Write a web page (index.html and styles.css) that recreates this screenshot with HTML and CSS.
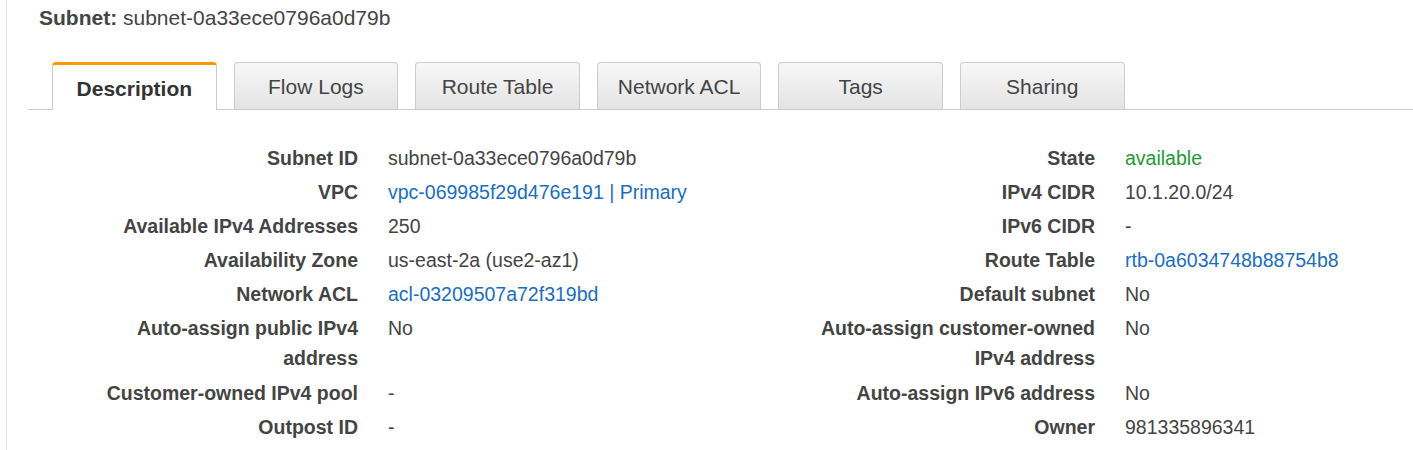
FILE: index.html
```html
<!DOCTYPE html>
<html lang="en">
<head>
<meta charset="utf-8">
<title>Subnet details</title>
<link rel="stylesheet" href="styles.css">
</head>
<body>
<div class="page">
  <div class="header"><span class="header-label">Subnet:</span> subnet-0a33ece0796a0d79b</div>
  <div class="tabs">
    <div class="tab active">Description</div>
    <div class="tab">Flow Logs</div>
    <div class="tab">Route Table</div>
    <div class="tab">Network ACL</div>
    <div class="tab">Tags</div>
    <div class="tab">Sharing</div>
  </div>
  <div class="details">
    <div class="label">Subnet ID</div>
    <div class="value">subnet-0a33ece0796a0d79b</div>
    <div class="label">State</div>
    <div class="value ok">available</div>

    <div class="label">VPC</div>
    <div class="value link">vpc-069985f29d476e191 | Primary</div>
    <div class="label">IPv4 CIDR</div>
    <div class="value">10.1.20.0/24</div>

    <div class="label">Available IPv4 Addresses</div>
    <div class="value">250</div>
    <div class="label">IPv6 CIDR</div>
    <div class="value">-</div>

    <div class="label">Availability Zone</div>
    <div class="value">us-east-2a (use2-az1)</div>
    <div class="label">Route Table</div>
    <div class="value link">rtb-0a6034748b88754b8</div>

    <div class="label">Network ACL</div>
    <div class="value link">acl-03209507a72f319bd</div>
    <div class="label">Default subnet</div>
    <div class="value">No</div>

    <div class="label tall">Auto-assign public IPv4 address</div>
    <div class="value">No</div>
    <div class="label tall">Auto-assign customer-owned IPv4 address</div>
    <div class="value">No</div>

    <div class="label">Customer-owned IPv4 pool</div>
    <div class="value">-</div>
    <div class="label">Auto-assign IPv6 address</div>
    <div class="value">No</div>

    <div class="label">Outpost ID</div>
    <div class="value">-</div>
    <div class="label">Owner</div>
    <div class="value">981335896341</div>
  </div>
</div>
</body>
</html>
```

FILE: styles.css
```css
html, body {
  margin: 0;
  padding: 0;
  background: #ffffff;
}

body {
  font-family: "Liberation Sans", Arial, Helvetica, sans-serif;
  color: #444444;
}

.page {
  margin-left: 6px;
  border-left: 1px solid #e6e6e6;
  min-height: 450px;
  box-sizing: border-box;
}

.header {
  padding: 6px 0 0 32px;
  font-size: 21px;
  line-height: 24px;
  color: #444444;
}

.header-label {
  font-weight: bold;
}

.tabs {
  display: flex;
  align-items: flex-end;
  gap: 17px;
  margin: 32px 0 0 21px;
  padding-left: 24px;
  border-bottom: 1px solid #cccccc;
  height: 47px;
}

.tab {
  box-sizing: border-box;
  width: 164.6px;
  height: 47px;
  display: flex;
  align-items: center;
  justify-content: center;
  padding-top: 1px;
  font-size: 21px;
  color: #444444;
  border: 1px solid #cccccc;
  border-bottom: none;
  border-radius: 4px 4px 0 0;
  background: linear-gradient(#f7f7f7, #e4e4e4);
}

.tab.active {
  height: 48px;
  margin-bottom: -1px;
  padding-top: 3px;
  background: #ffffff;
  border-top: 3px solid #ff9900;
  font-weight: bold;
  color: #333333;
}

.details {
  display: grid;
  grid-template-columns: 290px 387px 290px 1fr;
  column-gap: 30px;
  row-gap: 4px;
  margin: 33px 0 0 61px;
  font-size: 19.5px;
  line-height: 30px;
}

.label {
  font-weight: bold;
  text-align: right;
  color: #444444;
}

.label.tall {
  padding-bottom: 1px;
}

.value {
  color: #444444;
}

.value.link {
  color: #1a6ec0;
}

.value.ok {
  color: #1d9a35;
}
```
